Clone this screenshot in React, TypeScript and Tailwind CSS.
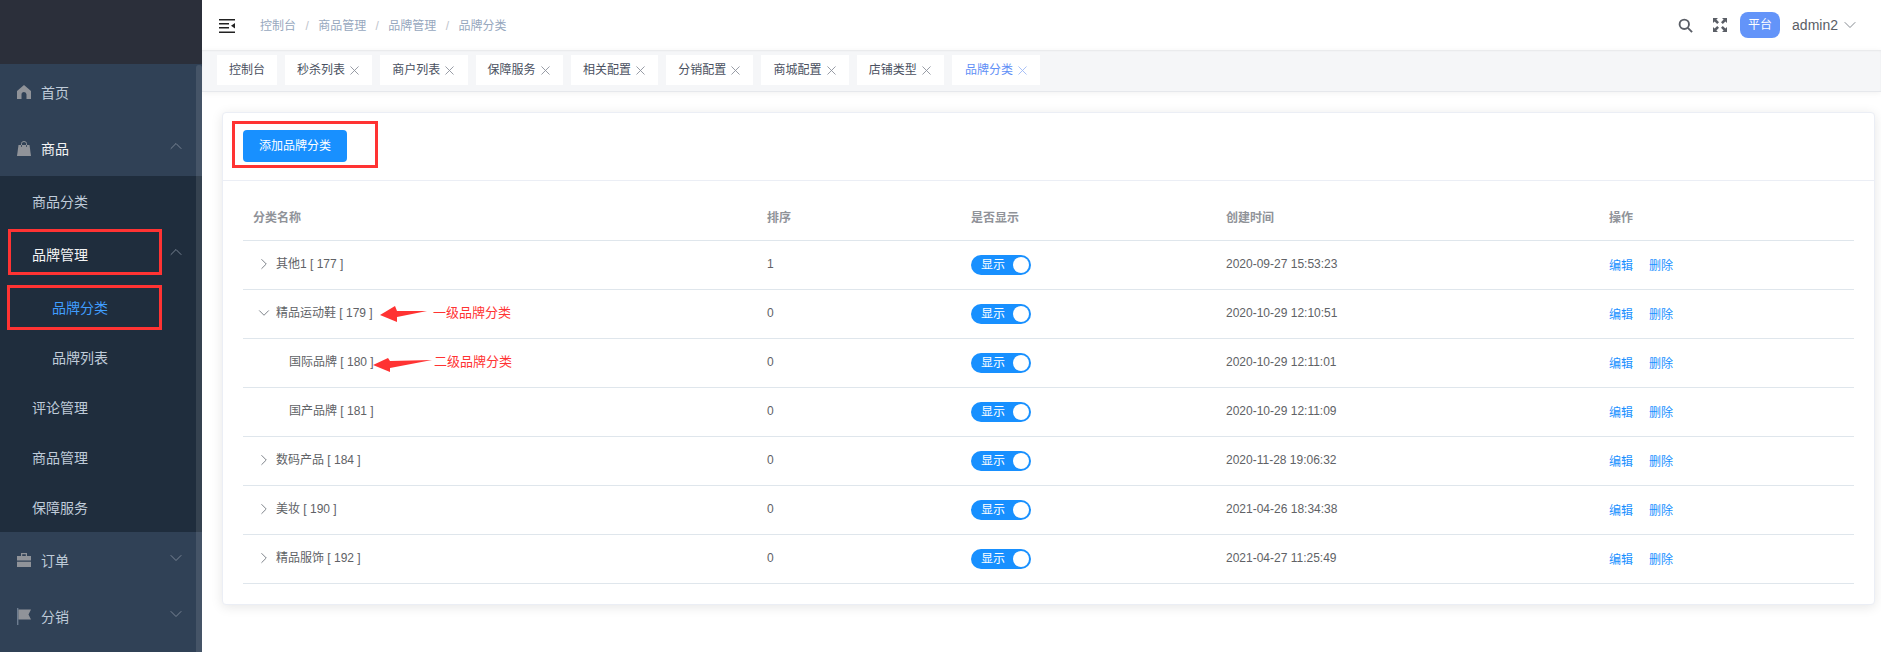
import { ChevronDown, ChevronRight, ChevronUp, X } from "lucide-react";
import { ReactNode } from "react";

const FONT = "font-['Liberation_Sans','Noto_Sans_CJK_SC',sans-serif]";

const tags = ["秒杀列表", "商户列表", "保障服务", "相关配置", "分销配置", "商城配置", "店铺类型"];
const crumbs = ["控制台", "商品管理", "品牌管理", "品牌分类"];

const rows = [
  { name: "其他1 [ 177 ]", sort: 1, time: "2020-09-27 15:53:23", level: "closed" },
  { name: "精品运动鞋 [ 179 ]", sort: 0, time: "2020-10-29 12:10:51", level: "open" },
  { name: "国际品牌 [ 180 ]", sort: 0, time: "2020-10-29 12:11:01", level: "child" },
  { name: "国产品牌 [ 181 ]", sort: 0, time: "2020-10-29 12:11:09", level: "child" },
  { name: "数码产品 [ 184 ]", sort: 0, time: "2020-11-28 19:06:32", level: "closed" },
  { name: "美妆 [ 190 ]", sort: 0, time: "2021-04-26 18:34:38", level: "closed" },
  { name: "精品服饰 [ 192 ]", sort: 0, time: "2021-04-27 11:25:49", level: "closed" },
];

const HomeIcon = () => (
  <svg viewBox="0 0 14 14" className="h-[14px] w-[14px] fill-[#909399]">
    <path d="M7 0 14 6V14H9.5V9.5A2.5 2.5 0 0 0 4.5 9.5V14H0V6Z" />
  </svg>
);

const BagIcon = () => (
  <svg viewBox="0 0 14 15" className="h-[15px] w-[14px]">
    <path d="M1.5 4H12.5L14 15H0Z" className="fill-[#909399]" />
    <path d="M4.5 6V2.5A2.5 2 0 0 1 9.5 2.5V6" className="fill-none stroke-[#304156]" strokeWidth="0.8" />
    <path d="M4.5 4V2.5A2.5 2 0 0 1 9.5 2.5V4" className="fill-none stroke-[#909399]" strokeWidth="1" />
  </svg>
);

const CaseIcon = () => (
  <svg viewBox="0 0 14 14" className="h-[14px] w-[14px] fill-[#909399]">
    <path d="M4 0H10V3H14V7.5H0V3H4ZM5.2 1.2V3H8.8V1.2ZM0 8.7H14V14H0Z" fillRule="evenodd" />
  </svg>
);

const FlagIcon = () => (
  <svg viewBox="0 0 14 17" className="h-[17px] w-[14px]">
    <path d="M0 0H1.4V17H0Z" className="fill-[#6d7c90]" />
    <path d="M1.4 1.5H14L11.5 6.5 14 11.5H1.4Z" className="fill-[#909399]" />
  </svg>
);

const TopItem = ({ icon, label, open, bright }: { icon: ReactNode; label: string; open?: boolean; bright?: boolean }) => (
  <div className={`flex h-14 items-center pl-[17px] pr-4 text-sm ${bright ? "text-[#f4f4f5]" : "text-[#bfcbd9]"}`}>
    <span className="mr-2.5 flex w-[14px] justify-center">{icon}</span>
    <span className="mt-0.5 flex-1">{label}</span>
    {open === undefined ? null : open ? (
      <ChevronUp size={20} strokeWidth={1.1} className="-mt-1 text-[#7f8a99]" />
    ) : (
      <ChevronDown size={20} strokeWidth={1.1} className="-mt-1 text-[#7f8a99]" />
    )}
  </div>
);

const SubItem = ({ label, deep, active }: { label: string; deep?: boolean; active?: boolean }) => (
  <div
    className={`flex h-[50px] items-center pt-0.5 text-sm ${deep ? "pl-[52px]" : "pl-8"} ${
      active ? "text-[#409eff]" : "text-[#bfcbd9]"
    }`}
  >
    {label}
  </div>
);

const Sidebar = () => (
  <aside className="relative flex h-full w-[202px] shrink-0 flex-col bg-[#304156]">
    <div className="h-16 shrink-0 bg-[#2b2f3a]" />
    <TopItem icon={<HomeIcon />} label="首页" />
    <TopItem icon={<BagIcon />} label="商品" open bright />
    <div className="bg-[#1f2d3d]">
      <SubItem label="商品分类" />
      <div className="flex h-14 items-center pl-8 pr-4 text-sm text-[#f4f4f5]">
        <span className="mt-0.5 flex-1">品牌管理</span>
        <ChevronUp size={20} strokeWidth={1.1} className="-mt-1 text-[#7f8a99]" />
      </div>
      <SubItem label="品牌分类" deep active />
      <SubItem label="品牌列表" deep />
      <SubItem label="评论管理" />
      <SubItem label="商品管理" />
      <SubItem label="保障服务" />
    </div>
    <TopItem icon={<CaseIcon />} label="订单" open={false} />
    <TopItem icon={<FlagIcon />} label="分销" open={false} />
    <div className="absolute bottom-0 right-0 top-[65px] w-1.5 rounded-t-md bg-white/10" />
  </aside>
);

const MenuToggle = () => (
  <svg viewBox="0 0 16 14" className="h-[14px] w-4 fill-[#222]">
    <path d="M0 0H16V1.5H0ZM0 4H10V5.5H0ZM0 8H10V9.5H0ZM0 12.5H16V14H0ZM12 6.7 16 4V9.5Z" />
  </svg>
);

const Header = () => (
  <header className="flex h-[50px] shrink-0 items-center pl-[17px] pr-[21px]">
    <div className="mt-[2px]">
      <MenuToggle />
    </div>
    <nav className="ml-[25px] mt-[1px] flex items-center text-xs text-[#97a8be]">
      {crumbs.map((c, i) => (
        <span key={c} className="flex items-center">
          {i > 0 && <span className="mx-[9.4px] text-[#c0c4cc]">/</span>}
          {c}
        </span>
      ))}
    </nav>
    <div className="ml-auto flex items-center">
      <svg viewBox="0 0 16 16" className="h-[15px] w-[15px] fill-none stroke-[#5a5e66]" strokeWidth="2">
        <circle cx="6.7" cy="6.7" r="5" />
        <path d="M10.5 10.5 15 15" />
      </svg>
      <svg viewBox="0 0 16 16" className="ml-[19px] h-4 w-4 fill-[#5a5e66]">
        <path d="M1 1H6L4.4 2.6 7 5.2 5.2 7 2.6 4.4 1 6ZM15 1V6L13.4 4.4 10.8 7 9 5.2 11.6 2.6 10 1ZM1 15V10L2.6 11.6 5.2 9 7 10.8 4.4 13.4 6 15ZM15 15H10L11.6 13.4 9 10.8 10.8 9 13.4 11.6 15 10Z" />
      </svg>
      <span className="ml-3 flex h-[26px] w-10 items-center justify-center rounded-lg bg-[#6394f9] text-xs text-white">
        平台
      </span>
      <span className="ml-3 text-sm text-[#5a5e66]">admin2</span>
      <ChevronDown size={20} strokeWidth={1.1} className="ml-0.5 text-[#7a7f87]" />
    </div>
  </header>
);

const Tag = ({ label, active, closable = true }: { label: string; active?: boolean; closable?: boolean }) => (
  <div
    className={`flex h-[30px] items-center bg-white text-xs ${
      active
        ? "w-[88px] pl-[13px] text-[#5f8ff6]"
        : closable
          ? "w-[87.3px] pl-3 text-[#495060]"
          : "w-[60px] pl-3 text-[#495060]"
    }`}
  >
    {label}
    {closable && (
      <X size={15} strokeWidth={1.4} className={`ml-[2px] ${active ? "text-[#9db8f7]" : "text-[#8a8f99]"}`} />
    )}
  </div>
);

const TagsBar = () => (
  <div className="flex h-[42px] shrink-0 gap-2 border-b border-[#e6e8ec] bg-[#f5f6f8] pl-[15px] pt-[5px] shadow-[0_1px_6px_rgba(0,0,0,0.06),inset_0_1px_2px_rgba(0,0,0,0.06)]">
    <Tag label="控制台" closable={false} />
    {tags.map((t) => (
      <Tag key={t} label={t} />
    ))}
    <Tag label="品牌分类" active />
  </div>
);

const Toggle = () => (
  <div className="flex h-5 w-[60px] items-center justify-between rounded-full bg-[#1890ff] pl-2.5 pr-0.5 text-xs text-white">
    显示
    <span className="h-4 w-4 rounded-full bg-white" />
  </div>
);

const CategoryTable = () => (
  <table className="ml-5 w-[1611px] table-fixed border-collapse text-xs text-[#606266]">
    <colgroup>
      <col className="w-[514px]" />
      <col className="w-[204px]" />
      <col className="w-[255px]" />
      <col className="w-[383px]" />
      <col className="w-[255px]" />
    </colgroup>
    <thead>
      <tr className="h-[59px] border-b border-[#dfe6ec] text-left text-[#909399]">
        {["分类名称", "排序", "是否显示", "创建时间", "操作"].map((h) => (
          <th key={h} className="px-2.5 pt-4 font-bold">
            {h}
          </th>
        ))}
      </tr>
    </thead>
    <tbody>
      {rows.map((r) => (
        <tr key={r.name} className="h-[49px] border-b border-[#dfe6ec]">
          <td className="px-2.5 pb-0.5">
            <div className={`flex items-center ${r.level === "child" ? "pl-9" : "pl-[23px]"}`}>
              {r.level === "closed" && (
                <ChevronRight size={18} strokeWidth={1.3} className="-ml-[21px] mr-[3px] text-[#7a7f87]" />
              )}
              {r.level === "open" && (
                <ChevronDown size={18} strokeWidth={1.3} className="-ml-[21px] mr-[3px] text-[#7a7f87]" />
              )}
              <span>{r.name}</span>
            </div>
          </td>
          <td className="px-2.5 pb-0.5">{r.sort}</td>
          <td className="px-2.5">
            <Toggle />
          </td>
          <td className="px-2.5 pb-0.5">{r.time}</td>
          <td className="px-2.5 pt-[3px] text-[#1890ff]">
            <span className="mr-4">编辑</span>
            <span>删除</span>
          </td>
        </tr>
      ))}
    </tbody>
  </table>
);

const Arrow = ({ className, points }: { className: string; points: string }) => (
  <svg className={`absolute ${className}`} viewBox="0 0 60 20">
    <polygon points={points} className="fill-[#ff3333]" />
  </svg>
);

const Annotations = () => (
  <div className="pointer-events-none absolute inset-0">
    <div className="absolute left-[232px] top-[121px] h-[47px] w-[146px] border-[3px] border-[#ff3333]" />
    <div className="absolute left-2 top-[229px] h-[46px] w-[154px] border-[3px] border-[#ff3333]" />
    <div className="absolute left-[7px] top-[285px] h-[45px] w-[155px] border-[3px] border-[#ff3333]" />
    <Arrow className="left-[378px] top-[303px] h-5 w-[60px]" points="2,12 17,3 19,8 49,8 19,14 19,19" />
    <Arrow className="left-[372px] top-[355px] h-5 w-[60px]" points="1,10 16,3 18,6 60,5 18,13 18,17" />
    <span className="absolute left-[433px] top-[304px] text-[13px] leading-[18px] text-[#ff3333]">一级品牌分类</span>
    <span className="absolute left-[434px] top-[353px] text-[13px] leading-[18px] text-[#ff3333]">二级品牌分类</span>
  </div>
);

export default function App() {
  return (
    <div className={`relative flex h-screen w-full overflow-hidden bg-white ${FONT}`}>
      <Sidebar />
      <main className="flex min-w-0 flex-1 flex-col">
        <Header />
        <TagsBar />
        <div className="pl-5 pt-5">
          <section className="h-[493px] w-[1653px] rounded border border-[#ebeef5] bg-white shadow-[0_2px_12px_rgba(0,0,0,0.1)]">
            <div className="flex h-[68px] items-start border-b border-[#ebeef5] pl-5 pt-[17px]">
              <button className="h-8 w-[104px] rounded bg-[#1890ff] text-xs text-white">添加品牌分类</button>
            </div>
            <CategoryTable />
          </section>
        </div>
      </main>
      <Annotations />
    </div>
  );
}
